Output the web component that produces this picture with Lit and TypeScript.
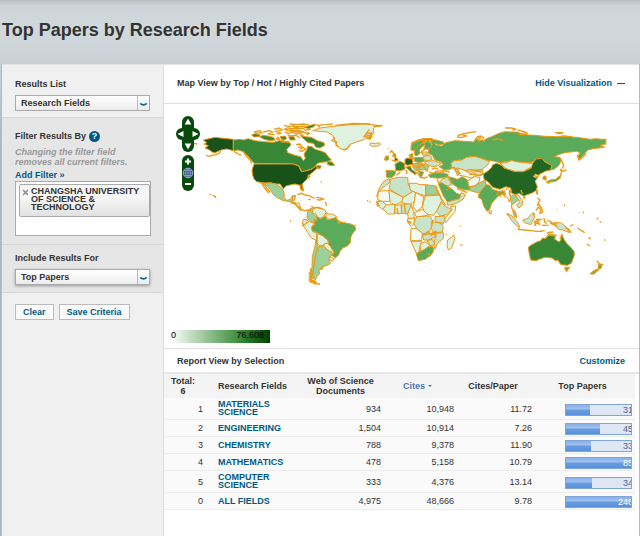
import { LitElement, html, svg, css } from "lit";
import { customElement, state } from "lit/decorators.js";

type Land = [tone: string, points: string];
interface Region { x: number; y: number; lands: Land[]; coasts: string[] }

/* Map drawing, split by region. Tones a (fewest papers) to g (most). */
const REGIONS: Region[] = [
  {
    x: 228, y: 21,
    lands: [
      ["g", "-20,88 -50,85 -75,82 -97,87 -110,90 -100,98 -108,102 -95,107 -105,114 -93,119 -84,126 -75,129 -66,124 -56,120 -40,117 -20,122"],
      ["e", "-20,90 0,88 10,90 25,86 45,92 70,95 100,97 118,92 130,94 150,98 152,106 140,118 143,128 165,136 182,140 190,152 196,145 192,132 200,120 203,108 216,110 225,118 240,122 256,128 265,140 274,150 262,155 245,157 232,160 225,170 212,178 200,182 185,185 182,177 176,167 160,162 42,160 34,150 25,140 12,126 -5,120 -20,122"],
      ["g", "42,162 160,162 176,168 184,185 200,182 215,178 228,168 236,170 226,180 214,190 205,198 201,208 188,220 186,226 190,242 184,240 180,226 165,222 150,225 138,228 130,236 120,222 108,222 90,218 75,220 50,215 42,207 38,196 36,180"],
      ["c", "62,219 90,219 108,222 128,236 133,252 132,262 140,271 152,268 157,257 167,257 163,270 152,275 130,272 110,262 98,252 92,240 82,228"],
      ["b", "218,62 240,54 270,50 300,47 330,44 380,42 412,46 400,56 402,70 392,80 374,88 350,96 330,103 322,114 315,121 300,115 288,102 284,90 278,76 262,66 240,64"],
      ["b", "388,103 394,99 406,101 418,98 422,103 412,108 396,109"],
      ["e", "35,75 45,71 60,74 58,80 42,81"],
      ["e", "58,80 68,76 84,78 100,82 106,90 90,92 72,88"],
      ["e", "180,76 196,80 214,82 232,92 252,98 254,106 240,114 228,112 220,100 204,98 192,88"],
      ["e", "192,52 210,46 228,42 222,50 206,56"],
      ["e", "262,155 276,156 284,166 272,167 262,163"],
      ["e", "120,80 136,78 140,86 128,92"],
      ["e", "146,80 162,80 166,90 150,90"],
      ["e", "232,166 244,168 240,176 230,173"],
    ],
    coasts: [
      "42,66 60,62 66,68 46,70", "70,66 88,62 98,66 84,72 104,74", "102,58 118,54 126,60 108,64 124,70 110,72",
      "132,46 148,50 160,47 172,52 158,56 142,54 134,58 150,62 172,60 184,66", "134,66 146,70 158,66 168,72 182,70 190,78",
      "150,42 170,44 190,42 206,44", "160,54 176,56 188,54 196,60 212,58", "112,80 118,86 110,90", "142,74 152,78 168,76 180,84",
      "138,60 160,64 180,62 196,68", "158,50 180,50 196,48", "150,58 170,66 188,66 204,72", "108,84 128,96 148,94", "200,66 208,70 200,76",
      "180,118 190,112 196,118 186,124 176,122", "168,104 180,102 186,110 174,112", "130,86 124,92 140,96",
      "66,222 74,234 84,246 88,250", "72,222 80,234 90,246", "-88,137 -70,133 -62,129 -58,122", "-102,136 -92,139 -84,136", "-140,100 -128,102",
      "-90,252 -86,255", "-82,256 -74,260 -72,264", "-18,124 -6,132 4,136", "10,126 20,140 30,150 36,160",
      "388,58 372,80 388,76", "380,72 394,68 386,84 398,80", "376,78 390,88 396,70", "284,82 276,92 290,96 288,106 296,112", "308,118 320,118 330,105",
      "400,48 414,50 428,47", "240,52 232,46 258,44 278,42", "286,46 340,40 390,42", "242,216 245,217",
      "203,194 209,199 204,206", "180,224 182,238 190,242 186,222", "232,174 240,176",
    ],
  },
  {
    x: 228, y: 261,
    lands: [
      ["c", "212,54 203,65 201,82 207,92 222,100 228,92 230,80 220,74 216,66 220,58"],
      ["b", "219,56 230,52 240,56 254,58 258,68 250,80 240,85 231,80 228,72 218,70"],
      ["b", "258,68 266,72 276,72 290,80 284,86 266,88 258,80"],
      ["d", "222,88 228,94 232,80 242,87 256,78 262,90 275,87 288,82 294,94 304,96 322,100 336,103 346,111 347,119 338,130 333,140 331,158 322,168 308,174 300,184 296,195 286,204 276,196 283,186 273,178 266,165 265,152 252,140 236,132 228,126 215,124 214,112 224,104"],
      ["b", "190,88 203,90 198,100 190,106 187,98"],
      ["b", "190,106 200,100 208,94 222,100 214,112 217,124 230,130 230,152 214,144 205,130 197,118"],
      ["b", "232,130 248,138 264,152 264,165 246,166 240,168 232,160"],
      ["b", "252,162 262,160 272,170 278,182 272,188 260,178 251,170"],
      ["c", "236,170 250,168 262,178 272,186 280,190 269,202 268,212 272,220 262,226 246,230 248,236 236,242 240,250 230,260 226,270 218,262 220,240 224,210 230,185"],
      ["b", "268,200 284,207 278,212 268,210"],
      ["c", "228,150 234,170 226,196 222,226 216,258 212,270 209,250 216,232 217,200 224,172"],
      ["b", "158,20 164,20 164,30 160,34"], ["b", "160,38 178,40 182,54 170,48"],
    ],
    coasts: [
      "210,236 216,244 208,250 218,254 209,260 219,264 208,270 221,272 212,277 226,276 222,281 240,282",
      "207,262 214,268 210,275 230,279 222,272", "150,34 164,39 170,46 180,56 194,63 203,60 214,60", "152,38 166,42 174,52 184,62",
      "172,14 184,10 196,15 208,17 218,23 224,24", "228,23 238,23 250,27 240,30 230,29", "205,28 212,29", "256,36 260,48",
      "188,98 190,110", "344,104 346,108", "150,92 153,94", "290,88 296,92 300,98 291,99", "214,48 222,54 234,52 248,56",
      "382,30 384,34", "388,35 391,37", "242,236 250,232", "184,0 190,2",
    ],
  },
  {
    x: 633, y: 21,
    lands: [
      ["d", "165,88 182,90 205,96 207,102 190,104 178,100 184,106 200,108 212,98 240,92 270,94 298,96 303,86 310,90 326,92 334,86 350,80 372,70 390,65 410,66 428,66 440,72 460,75 480,76 510,79 545,80 585,80 620,84 645,88 665,86 692,90 690,102 676,106 688,112 655,116 638,120 628,132 612,150 607,140 616,128 604,124 570,128 550,134 538,140 555,142 558,152 552,166 537,178 528,180 530,166 510,155 500,146 485,150 470,157 445,158 410,152 375,158 355,153 340,152 320,145 300,139 275,142 260,150 237,152 228,160 232,172 225,179 208,180 192,170 204,164 200,156 180,150 172,136 160,130 160,118 172,104"],
      ["b2", "228,160 237,152 260,150 275,142 300,139 320,146 343,154 338,165 322,178 300,180 285,178 270,182 248,174 240,180 230,172"],
      ["a", "240,178 256,176 270,182 285,190 296,188 302,196 290,204 275,200 255,196 245,192"],
      ["b", "300,182 324,180 322,192 306,198 300,190"],
      ["d", "108,120 110,98 130,90 150,86 172,86 176,92 160,92 145,96 134,106 124,116 118,122"],
      ["d", "120,118 134,104 146,98 150,104 140,112 132,120 136,128 126,138 118,134"],
      ["d", "148,98 160,92 168,100 170,112 156,118 146,116 150,108"],
      ["f", "54,130 62,132 62,142 70,150 58,154 60,144"],
      ["d", "30,142 40,138 42,148 32,152"],
      ["d", "33,181 62,183 60,194 50,203 35,202"],
      ["e", "60,162 75,154 88,160 90,178 76,182 62,181"],
      ["f", "90,148 98,144 112,146 114,162 98,166 90,162"],
      ["e", "92,172 106,168 110,178 124,188 120,194 104,182"],
      ["d", "118,143 142,142 148,154 134,158 118,154"],
      ["c", "112,162 134,158 150,164 134,170 114,168"],
      ["b2", "148,154 176,152 200,160 188,168 172,170 152,162"],
      ["b2", "146,138 164,136 172,148 160,152 146,150"],
      ["c", "132,170 152,164 162,170 158,178 136,180"],
      ["c", "112,170 134,172 134,182 122,182"],
      ["d", "132,184 146,186 140,200 134,198"],
      ["b2", "140,126 156,126 158,134 144,136"],
      ["d", "106,134 112,130 114,142 108,142"],
    ],
    coasts: [
      "248,82 250,76 264,72 282,68 304,65", "248,82 262,82 274,78 262,74", "306,80 318,78 326,84 320,92 330,94", "298,94 304,84 316,84 312,96",
      "352,90 368,86 384,92", "390,54 410,54 424,58 412,60", "428,60 444,64 456,68 440,70", "430,74 450,74 458,70", "540,68 566,68", "546,70 562,70",
      "550,80 566,78 590,80", "680,88 692,88 692,104", "675,108 688,110", "608,134 612,150 624,140 634,130",
      "108,118 110,104 126,92 146,86 172,86", "124,94 140,90 160,92", "38,116 41,116", "44,128 50,122 58,134 50,140", "28,150 34,138 42,140",
      "50,150 60,154 70,152", "0,48 20,46", "92,180 96,184 94,192", "118,194 128,188 132,196 140,204", "134,202 150,204 158,200",
      "224,176 236,172 246,178 256,192", "240,180 250,190 246,198", "180,184 206,182 224,186", "162,188 186,190 208,186", "150,178 160,184",
      "556,144 562,156 566,168 560,176", "568,180 574,182", "516,218 526,212 538,212 548,204 556,198 560,184 556,178", "522,222 520,214",
      "556,178 564,184 570,182", "506,198 512,204 512,210 504,206 508,200", "478,196 486,202 492,196", "482,204 488,200",
      "484,252 488,240", "568,284 570,285", "274,184 296,182 320,186", "282,192 300,194 318,196 326,190", "102,134 108,146 118,144",
      "170,178 180,174 190,178", "76,186 64,196", "150,118 140,124 142,132", "122,160 140,164 152,176", "130,166 126,178 134,186",
    ],
  },
  {
    x: 978, y: 21,
    lands: [
      ["b", "30,160 48,158 65,152 84,156 100,158 125,160 130,166 122,172 100,184 75,184 48,176"],
      ["f", "-20,192 -5,182 5,172 8,164 20,160 35,166 42,174 75,185 100,185 124,174 128,160 138,147 155,145 165,156 185,166 182,180 168,183 154,190 144,196 136,192 130,200 142,205 135,213 142,230 138,242 124,250 100,258 88,250 75,254 64,248 62,234 48,230 30,238 8,232 -5,216 -18,208"],
      ["d", "168,218 180,210 198,208 208,198 212,204 196,214"],
      ["d", "160,200 168,198 168,208 162,208"],
    ],
    coasts: ["100,262 104,260 102,266", "140,240 142,250"],
  },
  {
    x: 633, y: 201,
    lands: [
      ["b2", "26,34 42,26 46,36 28,50 12,64 8,76 5,80 12,56"],
      ["b2", "45,28 70,22 98,22 100,45 114,64 85,82 60,68 42,56 46,40"],
      ["a", "10,64 30,62 42,62 45,94 22,94 8,90"],
      ["b", "42,60 85,82 82,94 60,105 50,100 45,94"],
      ["b", "102,40 126,40 132,44 152,44 152,78 122,68 106,60"],
      ["c", "152,44 184,48 182,58 194,75 152,75"],
      ["b", "85,82 114,64 122,68 118,95 105,104 80,98"],
      ["a", "122,68 146,80 142,110 125,125 115,110 118,95"],
      ["b", "150,78 194,75 200,92 190,115 176,136 152,132 142,112"],
      ["b2", "200,96 210,108 230,118 216,134 196,138 184,124"],
      ["a", "226,110 242,108 240,124 212,158 208,148 218,136 232,118"],
      ["b2", "80,102 108,102 112,114 98,132 80,130"],
      ["b", "4,94 22,94 34,106 22,118 10,108"],
      ["b", "34,104 60,104 58,132 40,132 24,118"],
      ["b", "60,106 78,104 80,130 60,130"],
      ["b", "108,105 116,125 118,145 100,145 98,132"],
      ["a", "118,128 142,118 160,135 125,142"],
      ["b2", "180,140 210,138 208,154 200,165 180,152"],
      ["b2", "125,140 165,138 172,150 168,178 160,192 142,190 125,175 116,160"],
      ["b2", "174,156 195,158 205,170 202,186 180,188 168,176"],
      ["b", "98,146 120,144 116,162 108,170 98,156"],
      ["a", "108,175 125,176 142,190 140,212 106,212"],
      ["b2", "142,195 160,194 180,186 182,200 160,210 146,210"],
      ["b2", "184,190 205,188 206,204 186,222 180,238 176,222"],
      ["b", "108,214 140,214 134,234 132,248 124,250"],
      ["b", "136,222 150,215 166,226 150,240 136,242"],
      ["b2", "156,212 172,208 180,222 166,228"],
      ["d", "124,252 132,246 146,240 160,230 174,230 176,242 168,256 150,268 130,272"],
      ["b", "218,210 232,200 236,194 240,206 230,234 220,240 216,228"],
      ["d", "160,15 180,8 200,10 218,12 220,20 190,25 165,22"],
      ["b2", "202,26 218,22 230,44 216,48 192,40"],
      ["d", "190,42 200,38 216,48 232,58 244,70 258,74 254,86 232,92 218,96 206,80"],
      ["b2", "216,96 254,86 258,68 272,74 264,88 240,102 218,106"],
      ["d", "220,20 236,24 248,28 262,20 278,30 280,46 290,60 270,60 250,54 232,42"],
      ["a", "278,32 298,20 315,22 312,36 298,48 282,50"],
      ["c", "286,62 284,52 300,48 314,38 330,30 334,46 320,60 312,68 300,66"],
      ["d", "312,72 320,60 334,44 344,46 352,58 370,64 388,64 392,70 372,76 362,86 350,100 344,118 336,124 326,108 320,88 310,82"],
      ["b", "342,122 350,124 348,132 342,130"],
    ],
    coasts: [
      "4,96 10,100 6,104 14,106 6,108", "88,104 92,130", "66,114 70,134", "96,152 108,160", "98,158 108,156", "172,184 184,200", "176,150 168,160",
      "158,252 166,254", "212,192 215,194", "256,168 258,168", "256,226 262,224", "144,196 160,184 170,196 184,182", "190,158 206,160",
      "186,28 192,40", "212,60 224,54", "246,56 262,62 276,68", "184,52 198,84 212,106", "370,64 366,72 378,80", "374,64 386,76",
    ],
  },
  {
    x: 978, y: 261,
    lands: [
      ["a", "42,6 52,-8 60,4 62,22 58,36 52,22 44,20"],
      ["c", "62,20 70,14 82,20 86,30 76,38 66,44 62,34"],
      ["b2", "74,12 84,14 98,32 96,46 86,54 80,44 90,38"],
      ["c", "68,62 76,66 80,84 72,78"],
      ["b2", "52,70 66,78 82,96 90,112 78,106 64,90"],
      ["b2", "98,90 112,86 122,74 130,68 134,82 122,104 104,98"],
      ["b2", "190,98 212,98 230,112 240,128 218,120 206,118 196,108"],
      ["e", "115,172 122,166 140,156 152,152 158,144 166,146 174,136 196,138 194,148 208,156 213,148 215,132 222,148 230,160 242,172 252,184 253,196 244,220 232,226 212,224 204,210 196,212 186,204 164,202 148,208 138,212 122,210 118,192"],
      ["e", "224,234 236,234 230,242"],
      ["d", "326,222 336,222 334,234 324,238"],
      ["d", "304,248 318,238 326,240 312,252 302,252"],
    ],
    coasts: [
      "64,44 66,56 74,64 80,80", "60,18 58,6 66,0", "92,0 98,12", "100,22 104,24", "84,118 104,120 124,122 140,124 156,124", "84,114 90,120",
      "50,70 54,76", "138,88 152,88 142,94 150,104 138,98 136,108", "136,108 134,94 146,92", "162,84 164,96 170,100", "156,106 176,106",
      "172,92 182,94 190,104 200,100", "180,100 194,104 202,110", "226,112 236,118 244,128", "240,108 250,104", "262,114 272,120 284,128",
      "296,142 302,148", "290,162 300,168", "342,150 346,150", "142,24 150,30 144,40 150,48 140,44", "138,62 144,52 152,56 150,70 158,66 156,56",
      "148,48 156,54", "130,76 134,70", "320,212 326,218 330,226 340,224", "300,252 312,244 328,236", "210,148 216,132", "166,146 178,132 200,136",
      "150,124 164,122", "170,130 182,126", "176,128 190,126", "222,46 224,48", "278,66 282,68", "320,84 324,88", "330,94 332,98",
      "140,4 142,14", "36,0 46,10 42,20", "200,58 201,59", "268,68 269,69", "224,232 238,232 230,244 224,234",
    ],
  },
];

const FIELDS = [
  { rank: 1, name: "MATERIALS SCIENCE", docs: "934", cites: "10,948", ratio: "11.72", top: 31, share: 37 },
  { rank: 2, name: "ENGINEERING", docs: "1,504", cites: "10,914", ratio: "7.26", top: 45, share: 53 },
  { rank: 3, name: "CHEMISTRY", docs: "788", cites: "9,378", ratio: "11.90", top: 33, share: 39 },
  { rank: 4, name: "MATHEMATICS", docs: "478", cites: "5,158", ratio: "10.79", top: 85, share: 100 },
  { rank: 5, name: "COMPUTER SCIENCE", docs: "333", cites: "4,376", ratio: "13.14", top: 34, share: 40 },
  { rank: 0, name: "ALL FIELDS", docs: "4,975", cites: "48,666", ratio: "9.78", top: 246, share: 100 },
];

@customElement("world-map")
export class WorldMap extends LitElement {
  static styles = css`
    :host { display: block; position: relative; }
    .map { display: block; width: 100%; height: auto; }
    .land { stroke: #e89a16; stroke-width: 3; stroke-linejoin: bevel; }
    .coast { fill: none; stroke: #ea9a14; stroke-width: 4; }
    .a { fill: #f3faf3; }
    .b { fill: #dff1df; }
    .b2 { fill: #c8e3c8; }
    .c { fill: #9bd09b; }
    .d { fill: #5aab5a; }
    .e { fill: #388736; }
    .f { fill: #236623; }
    .g { fill: #195219; }
    .controls { position: absolute; left: 12px; top: 12px; width: 24px; display: grid; justify-items: center; gap: 3px; }
    .pan { position: relative; width: 24px; height: 36px; display: grid; grid-template: repeat(3, 12px) / 1fr 1fr; justify-items: center; }
    .cross { position: absolute; inset: 0; }
    .wide { grid-column: span 2; }
    .zoom { width: 12px; display: grid; background: #064a0c; border-radius: 6px; }
    button { position: relative; display: block; width: 12px; height: 12px; border: 0; padding: 0; background: none; cursor: pointer; }
    button svg { display: block; width: 12px; height: 12px; }
    .white { fill: #fff; }
    .line { fill: none; stroke: #fff; stroke-width: 2; }
    .ball { fill: #2b5560; stroke: #9aa9e0; }
    .grid { fill: none; stroke: #9aa9e0; stroke-width: 0.7; }
    .dark { fill: #064a0c; }
  `;

  render() {
    return html`
      <svg class="map" viewBox="0 3 1425 666" role="img" aria-label="World map of highly cited papers">
        ${REGIONS.map((r) => svg`<g transform="translate(${r.x} ${r.y})">
          ${r.lands.map(([tone, pts]) => svg`<polygon class="land ${tone}" points=${pts}></polygon>`)}
          ${r.coasts.map((pts) => svg`<polyline class="coast" points=${pts}></polyline>`)}
        </g>`)}
      </svg>
      <div class="controls">
        <div class="pan">
          <svg class="cross" viewBox="0 0 24 36" width="24" height="36" aria-hidden="true">
            <rect class="dark" x="6" width="12" height="36" rx="6"></rect>
            <rect class="dark" y="12" width="24" height="12" rx="6"></rect>
          </svg>
          <button class="wide" aria-label="Pan up"><svg viewBox="0 0 12 12"><path class="white" d="M6 2.500 9.300 8.500H2.700z"></path></svg></button>
          <button aria-label="Pan left"><svg viewBox="0 0 12 12"><path class="white" d="M1.500 6 7.500 3V9z"></path></svg></button>
          <button aria-label="Pan right"><svg viewBox="0 0 12 12"><path class="white" d="M10.500 6 4.500 3V9z"></path></svg></button>
          <button class="wide" aria-label="Pan down"><svg viewBox="0 0 12 12"><path class="white" d="M6 9.500 9.300 3.500H2.700z"></path></svg></button>
        </div>
        <div class="zoom">
          <button aria-label="Zoom in"><svg viewBox="0 0 12 12"><path class="line" d="M3 6.500H9M6 3.500V9.500"></path></svg></button>
          <button aria-label="Zoom to world"><svg viewBox="0 0 12 12"><circle class="ball" cx="6" cy="6" r="4.800"></circle><path class="grid" d="M1 6H11M6 1V11M2 3.500H10M2 8.500H10M6 1Q1 6 6 11Q11 6 6 1"></path></svg></button>
          <button aria-label="Zoom out"><svg viewBox="0 0 12 12"><path class="line" d="M3 5H9"></path></svg></button>
        </div>
      </div>
    `;
  }
}

@customElement("app-root")
export class AppRoot extends LitElement {
  @state() private open = true;

  static styles = css`
    * { box-sizing: border-box; }
    :host {
      display: flex; flex-direction: column; min-height: 100vh;
      font: 9px/12px "Liberation Sans", Arial, sans-serif; color: #333;
      background: linear-gradient(#b9bfc4, #cdd5d9 6px, #d1d9dc 30px, #c9d1d8 64px, #a9b9c4 140px);
    }
    h1 { margin: 0; padding: 18px 2px 22px; font-size: 18px; line-height: 24px; }
    h2 { margin: 0; font-size: 9px; line-height: 12px; }
    a { color: #005a84; font-weight: bold; text-decoration: none; }
    .page { flex: 1; display: flex; margin: 0 0 0 1px; border: solid #b3bcc1; border-width: 0 1px 0 1px; }
    .side { flex: 0 0 162px; background: #f0f0f0; border-right: 1px solid #dcdcdc; border-top: 1px solid #e2e5e7; }
    .main { flex: 1; min-width: 0; background: #fff; border-top: 1px solid #e2e5e7; }
    .group { padding: 13px 12px 6px 13px; border-bottom: 1px solid #d6d6d6; }
    .shade { background: #e6e6e6; }
    .label { display: block; font-weight: bold; line-height: 12px; }
    .first .label { margin-bottom: 5px; }
    .include { padding-top: 7px; padding-bottom: 7px; }
    .include .label { margin-bottom: 5px; }
    .filter { padding-top: 12px; padding-bottom: 8px; }
    .pick { position: relative; display: block; width: 135px; }
    select {
      display: block; width: 100%; height: 16px; padding: 0 18px 0 5px; margin: 0; appearance: none;
      border: 1px solid #aaa; border-radius: 0; background: linear-gradient(#fff, #ececec);
      font: bold 9px/14px "Liberation Sans", Arial, sans-serif; color: #333;
    }
    .raised { box-shadow: 0 1px 3px #999; }
    .arrow { position: absolute; top: 1px; right: 1px; width: 12px; height: 14px; border-left: 1px solid #bbb; pointer-events: none; }
    .title { display: flex; align-items: center; gap: 3px; }
    .note { margin: 5px 0 2px; font-style: italic; font-weight: bold; line-height: 10px; color: #999; }
    .add { display: block; line-height: 12px; }
    .box { width: 136px; height: 55px; padding: 2px 0 0 3px; background: #fff; border: 1px solid #aaa; }
    .chip {
      display: flex; gap: 3px; padding: 2px 3px 5px 3px; border: 1px solid #aaa; border-radius: 2px;
      background: linear-gradient(#f6f6f6 40%, #e2e2e2); font-weight: bold; line-height: 8px;
    }
    .drop { border: 0; padding: 0; background: none; width: 5px; height: 8px; display: block; }
    .drop svg { display: block; width: 5px; height: 10px; }
    .help { display: block; width: 11px; height: 11px; border: 0; border-radius: 6px; padding: 0; background: #00588a; color: #fff; font: bold 9px/11px "Liberation Sans", Arial, sans-serif; }
    .actions { display: flex; gap: 5px; padding: 11px 13px; }
    .act {
      height: 16px; padding: 0 7px; border: 1px solid #bbb; background: #fafafa; color: #005a84;
      font: bold 9px/14px "Liberation Sans", Arial, sans-serif;
    }
    .bar { display: flex; justify-content: space-between; align-items: center; padding: 0 14px 0 13px; border-bottom: 1px solid #e0e0e0; }
    .top { height: 39px; padding-bottom: 2px; }
    .report { height: 25px; border-bottom: 2px solid #e6e6e6; }
    .toggle { border: 0; padding: 0; background: none; display: flex; align-items: center; gap: 5px; font: bold 9px/12px "Liberation Sans", Arial, sans-serif; color: #005a84; }
    .minus { width: 8px; height: 1px; background: #005a84; }
    .legend { display: flex; justify-content: space-between; width: 100px; height: 13px; margin: 4px 6px 5px; padding: 0 6px 0 1px; line-height: 11px; color: #000; background: linear-gradient(90deg, #fff, #388c38 70%, #004400 98%); }
    .mapwrap { border-bottom: 1px solid #e0e0e0; }
    table { width: calc(100% - 4px); table-layout: fixed; border-collapse: collapse; }
    .c-rank { width: 42px; } .c-docs { width: 81px; } .c-cites { width: 73px; } .c-ratio { width: 78px; } .c-top { width: 101px; }
    th { height: 24px; padding: 0 4px 0 0; background: #f4f4f4; line-height: 10px; text-align: center; }
    th.left { text-align: left; padding: 0 0 0 12px; }
    th a { color: #4a78b8; }
    .sort { display: inline-block; margin-left: 3px; vertical-align: 2px; border: 2px solid transparent; border-top-color: #4a78b8; border-bottom: 0; }
    td { height: 17px; padding: 0 2px 0 0; background: #fafafa; border-bottom: 1px solid #ececec; text-align: right; line-height: 8px; }
    td.left { padding: 2px 16px 3px 12px; text-align: left; }
    td.rank { padding-right: 3px; }
    td.meter { padding: 2px 3px 0 31px; }
    .track { position: relative; height: 12px; overflow: hidden; border: 1px solid #7fa4da; background: #dfe7f4; }
    .fill { height: 10px; background: linear-gradient(#86b0ea, #a3c2ee 4px, #6a9de0 5px, #5790dc); }
    .value { position: absolute; top: 0; right: -2px; line-height: 11px; color: #4d6391; }
    .full { color: #fff; }
  `;

  private picker(id: string, text: string, raised = false) {
    return html`<span class="pick">
      <select id=${id} class=${raised ? "raised" : ""}><option>${text}</option></select>
      <svg class="arrow" viewBox="0 0 12 14" aria-hidden="true"><path d="M2.500 7.500Q6 10.800 9.500 7.500" fill="none" stroke="#006a94" stroke-width="1.800"></path></svg>
    </span>`;
  }

  render() {
    return html`
      <h1>Top Papers by Research Fields</h1>
      <div class="page">
        <aside class="side">
          <div class="group first">
            <label class="label" for="list">Results List</label>
            ${this.picker("list", "Research Fields")}
          </div>
          <div class="group filter shade">
            <div class="title"><span class="label">Filter Results By</span><button class="help" aria-label="Help">?</button></div>
            <p class="note">Changing the filter field<br>removes all current filters.</p>
            <a class="add" href="#">Add Filter »</a>
            <div class="box">
              <div class="chip">
                <button class="drop" aria-label="Remove filter"><svg viewBox="0 0 5 10"><path d="M0 3 5 8M5 3 0 8" stroke="#888" stroke-width="1.500"></path></svg></button>
                <span>CHANGSHA UNIVERSITY OF SCIENCE &amp; TECHNOLOGY</span>
              </div>
            </div>
          </div>
          <div class="group include shade">
            <label class="label" for="include">Include Results For</label>
            ${this.picker("include", "Top Papers", true)}
          </div>
          <div class="actions">
            <button class="act">Clear</button>
            <button class="act">Save Criteria</button>
          </div>
        </aside>
        <main class="main">
          <div class="bar top">
            <h2>Map View by Top / Hot / Highly Cited Papers</h2>
            <button class="toggle" @click=${() => (this.open = !this.open)}>Hide Visualization<span class="minus"></span></button>
          </div>
          <div class="mapwrap" ?hidden=${!this.open}>
            <world-map></world-map>
            <div class="legend"><span>0</span><span>76,608</span></div>
          </div>
          <div class="bar report">
            <h2>Report View by Selection</h2>
            <a href="#">Customize</a>
          </div>
          <table>
            <colgroup><col class="c-rank"><col><col class="c-docs"><col class="c-cites"><col class="c-ratio"><col class="c-top"></colgroup>
            <thead>
              <tr>
                <th>Total:<br>6</th>
                <th class="left">Research Fields</th>
                <th>Web of Science<br>Documents</th>
                <th><a href="#">Cites<span class="sort"></span></a></th>
                <th>Cites/Paper</th>
                <th>Top Papers</th>
              </tr>
            </thead>
            <tbody>
              ${FIELDS.map((f) => html`<tr>
                <td class="rank">${f.rank}</td>
                <td class="left"><a href="#">${f.name}</a></td>
                <td>${f.docs}</td>
                <td>${f.cites}</td>
                <td>${f.ratio}</td>
                <td class="meter"><div class="track"><div class="fill" style="width:${f.share}%"></div><span class="value ${f.share === 100 ? "full" : ""}">${f.top}</span></div></td>
              </tr>`)}
            </tbody>
          </table>
        </main>
      </div>
    `;
  }
}
